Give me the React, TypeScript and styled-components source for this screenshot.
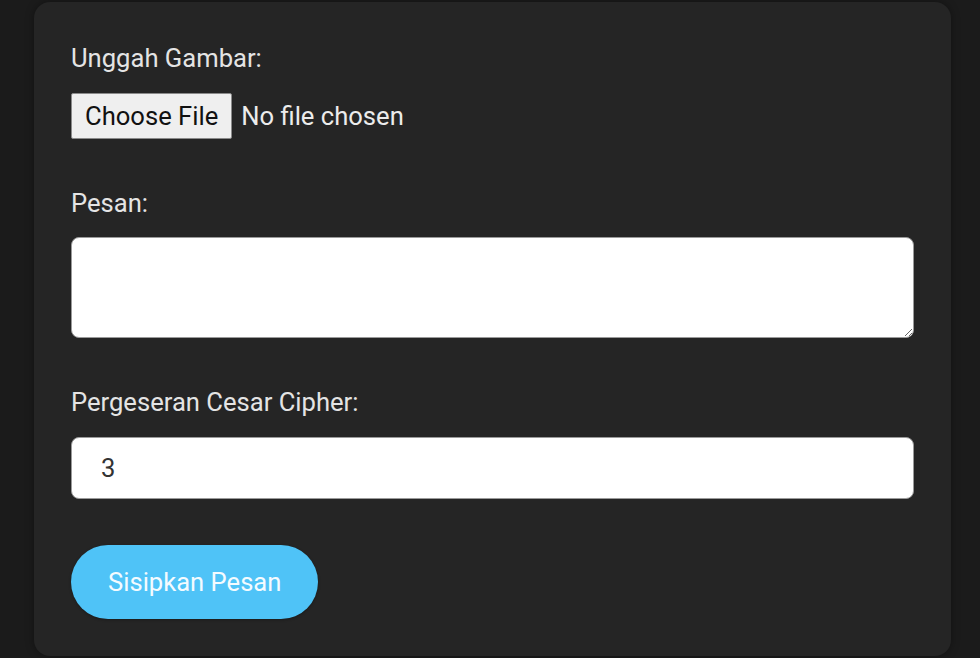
import React from "react";
import styled, { createGlobalStyle } from "styled-components";

const Global = createGlobalStyle`
  html, body { margin: 0; padding: 0; background: #1b1b1b; }
  body { font-family: Roboto, "Liberation Sans", Arial, sans-serif; height: 658px; overflow: hidden; }
`;

const Page = styled.div`
  padding: 2px 29px 0 34px;
`;

const Card = styled.form`
  background: #252525;
  border-radius: 16px;
  box-shadow: 0 0 8px rgba(0, 0, 0, 0.35);
  padding: 41px 37px 37px 37px;
  display: flex;
  flex-direction: column;
`;

const Field = styled.div<{ $gap: number; $after: number }>`
  display: flex;
  flex-direction: column;
  gap: ${(p) => p.$gap}px;
  margin-bottom: ${(p) => p.$after}px;
`;

const Label = styled.label`
  font-size: 25.6px;
  line-height: 30px;
  color: #e4e4e4;
`;

const FileInput = styled.input`
  display: block;
  font-family: Roboto, "Liberation Sans", Arial, sans-serif;
  font-size: 25.6px;
  color: #ececec;
  height: 46px;
  padding: 0;
  &::file-selector-button {
    font-family: inherit;
    font-size: 25.6px;
    height: 46px;
    padding: 0 13px;
    margin-right: 9px;
    background: #efefef;
    color: #111;
    border: 1px solid #8a8a8a;
    border-radius: 2px;
  }
`;

const TextArea = styled.textarea`
  display: block;
  box-sizing: border-box;
  width: 100%;
  height: 101px;
  border: 1px solid #9a9a9a;
  border-radius: 8px;
  background: #fff;
  font-family: inherit;
  font-size: 25.6px;
  padding: 12px 28px;
  resize: vertical;
`;

const NumberInput = styled.input`
  display: block;
  box-sizing: border-box;
  width: 100%;
  height: 62px;
  border: 1px solid #9a9a9a;
  border-radius: 8px;
  background: #fff;
  font-family: inherit;
  font-size: 25.6px;
  color: #333;
  padding: 0 29px;
  &::-webkit-inner-spin-button { display: none; }
`;

const Submit = styled.button`
  align-self: flex-start;
  height: 74px;
  padding: 0 37px;
  border: none;
  border-radius: 37px;
  background: #4fc3f7;
  color: #f4fbff;
  font-family: inherit;
  font-size: 25.6px;
  box-shadow: 0 1px 3px rgba(0,0,0,0.3);
`;

export default function App() {
  return (
    <Page>
      <Global />
      <Card onSubmit={(e) => e.preventDefault()}>
        <Field $gap={20} $after={49}>
          <Label htmlFor="img">Unggah Gambar:</Label>
          <FileInput id="img" type="file" accept="image/*" />
        </Field>
        <Field $gap={19} $after={49}>
          <Label htmlFor="msg">Pesan:</Label>
          <TextArea id="msg" />
        </Field>
        <Field $gap={20} $after={46}>
          <Label htmlFor="shift">Pergeseran Cesar Cipher:</Label>
          <NumberInput id="shift" type="number" defaultValue={3} />
        </Field>
        <Submit type="submit">Sisipkan Pesan</Submit>
      </Card>
    </Page>
  );
}
